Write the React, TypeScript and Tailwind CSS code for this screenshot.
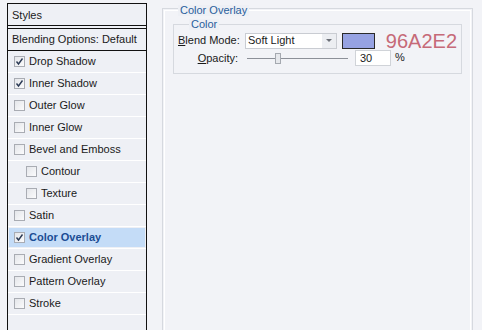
import React from "react";

type Item = { label: string; checked?: boolean; indent?: boolean; active?: boolean };

const items: Item[] = [
  { label: "Drop Shadow", checked: true },
  { label: "Inner Shadow", checked: true },
  { label: "Outer Glow" },
  { label: "Inner Glow" },
  { label: "Bevel and Emboss" },
  { label: "Contour", indent: true },
  { label: "Texture", indent: true },
  { label: "Satin" },
  { label: "Color Overlay", checked: true, active: true },
  { label: "Gradient Overlay" },
  { label: "Pattern Overlay" },
  { label: "Stroke" },
];

const Check = ({ checked }: { checked?: boolean }) => (
  <span className="flex h-[11px] w-[11px] items-center justify-center border border-[#a9acb3] bg-gradient-to-br from-[#e4e6ea] to-[#fbfbfc]">
    {checked && (
      <svg width="9" height="9" viewBox="0 0 9 9">
        <path d="M1.5 4.5 L3.5 7 L7.5 1.5" fill="none" stroke="#2b3a55" strokeWidth="1.4" />
      </svg>
    )}
  </span>
);

const Row = ({ item }: { item: Item }) => (
  <div className="h-[22px] border-b border-white px-px py-px">
    <div
      className={`flex h-full items-center gap-[4px] ${item.indent ? "pl-[17px]" : "pl-[5px]"} ${
        item.active ? "bg-[#c4dcf7] font-bold text-[#1b4d94]" : "text-[#1a1a1a]"
      }`}
    >
      <Check checked={item.checked} />
      <span>{item.label}</span>
    </div>
  </div>
);

const App = () => {
  return (
    <div
      className="flex h-[330px] w-[482px] overflow-hidden bg-[#f2f3f7] text-[11px] leading-none"
      style={{ fontFamily: '"Liberation Sans", Tahoma, sans-serif' }}
    >
      <div className="ml-[7px] mt-[3px] flex w-[140px] flex-col border-x border-t border-[#111] bg-[#eef0f5]">
        <div className="flex h-[22px] items-center border-b border-[#111] pl-[4px] pt-px text-[#1a1a1a]">Styles</div>
        <div className="mt-[2px] flex h-[23px] items-center border-y border-[#111] pl-[4px] text-[#1a1a1a]">
          Blending Options: Default
        </div>
        {items.map((it) => (
          <Row key={it.label} item={it} />
        ))}
        <div className="flex-1" />
      </div>

      <div className="ml-[15px] mt-[8px] flex w-[311px] flex-col border border-b-0 border-[#d6d9df] pl-px pr-px pt-px">
        <div className="flex flex-1 flex-col border border-b-0 border-white px-[8px]">
          <div className="-mt-[6px] ml-[5px] w-fit bg-[#eef0f5] px-[2px] text-[#2a5f9c]">Color Overlay</div>
          <div className="mt-[8px] h-[50px] border border-[#d6d9df] px-[4px]">
            <div className="-mt-[6px] ml-[11px] w-fit bg-[#eef0f5] px-[2px] text-[#2a5f9c]">Color</div>
            <div className="mt-[2px] flex h-[17px] items-center">
              <span className="w-[60px] whitespace-nowrap text-right text-[#1a1a1a]">
                <u>B</u>lend Mode:
              </span>
              <div className="ml-[7px] flex h-[16px] w-[93px] items-center justify-between border border-[#c9ccd2] bg-white pl-[2px]">
                <span className="text-[#1a1a1a]">Soft Light</span>
                <span className="flex h-full w-[14px] items-center justify-center bg-[#eceef2]">
                  <svg width="6" height="4" viewBox="0 0 6 4">
                    <path d="M0 0 H6 L3 3 Z" fill="#6c7078" />
                  </svg>
                </span>
              </div>
              <span className="ml-[5px] h-[16px] w-[33px] border border-[#2a2a2a] bg-[#96A2E2]" />
              <span className="ml-[11px] text-[20px] leading-[16px] text-[#c66a78]">96A2E2</span>
            </div>
            <div className="mt-px flex items-center">
              <span className="w-[60px] whitespace-nowrap text-right text-[#1a1a1a]">
                <u>O</u>pacity:
              </span>
              <div className="relative ml-[9px] h-[12px] w-[101px]">
                <div className="absolute left-0 right-0 top-[6px] h-px bg-[#8c9098]" />
                <div className="absolute left-[28px] top-[1px] h-[11px] w-[6px] border border-[#a5a9b0] bg-[#e6e8ec]" />
              </div>
              <div className="ml-[7px] flex h-[16px] w-[36px] items-center border border-[#d0d3d8] bg-white pl-[4px] text-[#1a1a1a]">
                30
              </div>
              <span className="ml-[4px] -mt-[2px] text-[#1a1a1a]">%</span>
            </div>
          </div>
        </div>
      </div>
    </div>
  );
};

export default App;
